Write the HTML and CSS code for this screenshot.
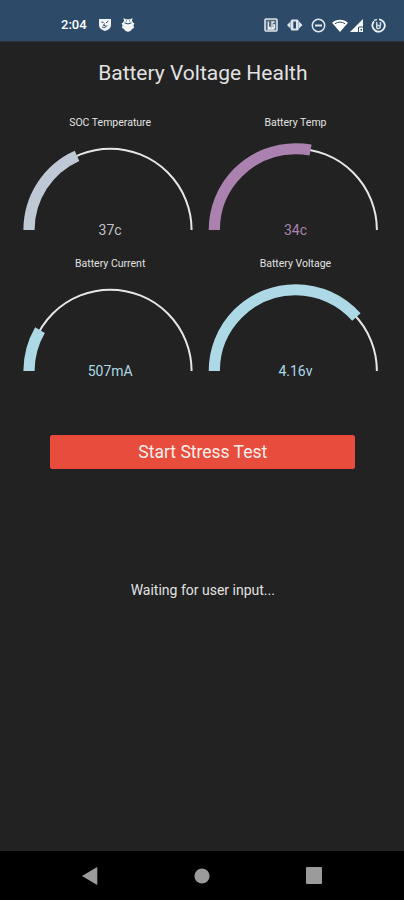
FILE: index.html
```
<!DOCTYPE html>
<html lang="en">
<head>
<meta charset="utf-8">
<title>Battery Voltage Health</title>
<link rel="stylesheet" href="styles.css">
</head>
<body>
<div class="phone">
  <header class="status">
    <time class="clock">2:04</time>
    <svg class="icon face" width="14" height="14" viewBox="0 0 14 14"><path fill="#f1f5f8" d="M1 1h12v6c0 3-2.500 5-6 6C3.500 12 1 10 1 7z"/><path fill="none" stroke="#2d4b69" stroke-width="1" d="M3.500 4l2 .5M8 5l2.500-2M4 9c2 .8 4 .5 5-1.500M6.500 5.500l-1 2h2"/></svg>
    <svg class="icon bug" width="14" height="16" viewBox="0 0 14 16"><path fill="#f1f5f8" d="M3 4L2.500 1l2.300 1.300h4.400L11.500 1 11 4l1 1.500 1.500 1-1 1.500.5 3-2 1c-1 2-2.500 2.700-4 2.700S4 14 3 12l-2-1 .5-3-1-1.500 1.500-1z"/><path stroke="#2d4b69" fill="none" d="M3.500 5.800q3.500 2.200 7 0M5.200 4h.8M8 4h.8"/></svg>
    <div class="system">
      <svg class="icon" width="14" height="14" viewBox="0 0 14 14"><rect x="1" y="1" width="12" height="12" rx="1" fill="#53697f" stroke="#dce3e9" stroke-width="1.600"/><path fill="none" stroke="#e8edf1" stroke-width="1.300" d="M4.300 3.500v6h2.500M10.500 4H8v5.500h2.500V7H9M3.500 11h7"/></svg>
      <svg class="icon" width="17" height="12" viewBox="0 0 17 12"><path fill="#dce5ed" d="M1 6l3.500-3.500v7zM16.500 6L13 2.500v7z"/><rect x="4.700" y="0.500" width="8" height="11" rx="1.500" fill="#dce5ed"/><path fill="#2d4b69" d="M7.300 2.500h2.700v7H7.300z"/></svg>
      <svg class="icon" width="15" height="15" viewBox="0 0 15 15"><circle cx="7.500" cy="7.500" r="6.200" fill="none" stroke="#dfe6ec" stroke-width="1.500"/><path stroke="#dfe6ec" stroke-width="2" d="M4 7.500h7"/></svg>
      <svg class="icon wifi" width="16" height="13" viewBox="0 0 16 13"><path fill="#fff" d="M0 3.700C4.500-.3 11.500-.3 16 3.700L8 13z"/><path fill="none" stroke="#2d4b69" stroke-width="1" d="M3 4.700q5-3.200 10 0"/></svg>
      <svg class="icon cell" width="13" height="13" viewBox="0 0 13 13"><path fill="#f4f7f9" d="M13 0v13H0z"/><path fill="#2d4b69" d="M8 8h1v5H8zM9 7.500h4v1H9zM10.500 10h1.500v1.500h-1.500z"/></svg>
      <svg class="icon" width="15" height="15" viewBox="0 0 15 15"><path fill="none" stroke="#eef2f5" stroke-width="1.800" d="M8 1.300a6.200 6.200 0 1 1-5 2"/><path fill="none" stroke="#cfd9e2" stroke-width="1.500" d="M3 2.500l3-1M5.700 4v6.500M5.700 7.500h2q1.600.2 1.600 1.500t-1.600 1.500h-2M9.500 4v4"/></svg>
    </div>
  </header>

  <main class="content">
    <h1 class="title">Battery Voltage Health</h1>
    <section class="gauges">
      <article class="gauge soc">
        <h2 class="label">SOC Temperature</h2>
        <svg class="dial" viewBox="0 0 176 92"><path class="track" d="M7 88a81.300 81.300 0 0 1 162.600 0"/><path class="level" pathLength="180" stroke-dasharray="65.800 200" d="M7 88a81.300 81.300 0 0 1 162.600 0"/></svg>
        <p class="value">37c</p>
      </article>
      <article class="gauge temp">
        <h2 class="label">Battery Temp</h2>
        <svg class="dial" viewBox="0 0 176 92"><path class="track" d="M7.300 88a81.300 81.300 0 0 1 162.600 0"/><path class="level" pathLength="180" stroke-dasharray="100.600 200" d="M7.300 88a81.300 81.300 0 0 1 162.600 0"/></svg>
        <p class="value">34c</p>
      </article>
      <article class="gauge current">
        <h2 class="label">Battery Current</h2>
        <svg class="dial" viewBox="0 0 176 92"><path class="track" d="M7 88a81.300 81.300 0 0 1 162.600 0"/><path class="level" pathLength="180" stroke-dasharray="30.200 200" d="M7 88a81.300 81.300 0 0 1 162.600 0"/></svg>
        <p class="value">507mA</p>
      </article>
      <article class="gauge voltage">
        <h2 class="label">Battery Voltage</h2>
        <svg class="dial" viewBox="0 0 176 92"><path class="track" d="M7.300 88a81.300 81.300 0 0 1 162.600 0"/><path class="level" pathLength="180" stroke-dasharray="138.400 200" d="M7.300 88a81.300 81.300 0 0 1 162.600 0"/></svg>
        <p class="value">4.16v</p>
      </article>
    </section>
    <button class="start" type="button">Start Stress Test</button>
    <p class="message">Waiting for user input...</p>
  </main>

  <nav class="navbar">
    <svg width="16" height="18" viewBox="0 0 16 18"><path d="M0 9L14.300.5Q15.300 0 15.300 1v16q0 1-1 .5z"/></svg>
    <svg width="16" height="16" viewBox="0 0 16 16"><circle cx="8" cy="8" r="7.600"/></svg>
    <svg width="16" height="17" viewBox="0 0 16 17"><rect width="16" height="17" rx="1"/></svg>
  </nav>
</div>
</body>
</html>
```
FILE: styles.css
```
* { box-sizing: border-box; }
body {
  margin: 0;
  background: #222;
  color: #e1e1e1;
  font-family: Roboto, "Liberation Sans", sans-serif;
}
h1, h2, p { margin: 0; font-weight: 400; }
.phone { display: flex; flex-direction: column; width: 404px; height: 900px; overflow: hidden; }

.status {
  display: flex;
  align-items: center;
  height: 42px;
  padding: 9px 18px 0 61px;
  background: #2d4b69;
  border-bottom: 1px solid #29323b;
}
.icon { display: block; flex: none; }
.clock { width: 37px; color: #fff; font-size: 13px; font-weight: 500; line-height: 16px; }
.bug { margin-left: 8.500px; }
.system { display: flex; align-items: center; gap: 8px; margin-left: auto; }
.wifi { margin-left: -2px; }
.cell { margin-left: -6px; }

.content { display: flex; flex: 1; flex-direction: column; align-items: center; padding-left: 1.600px; }
.title { margin-top: 17px; font-size: 21px; line-height: 28px; }
.gauges {
  display: grid;
  grid-template-columns: 185.300px 185.300px;
  grid-auto-rows: 141px;
  margin-top: 28px;
}
.gauge { display: flex; flex-direction: column; align-items: center; }
.label { font-size: 10.500px; line-height: 16px; }
.dial { display: block; width: 176px; height: 92px; margin-top: 11px; }
.track, .level { fill: none; }
.track { stroke: #e6e6e6; stroke-width: 2; }
.level { stroke: #add8e6; stroke-width: 11.200; }
.value { margin-top: -13px; font-size: 14px; line-height: 18px; color: #add8e6; }
.soc .level { stroke: #bec9d5; }
.soc .value { color: #c0c3c7; }
.temp .level { stroke: #ab82af; }
.temp .value { color: #ab82af; }

.start {
  width: 305px;
  height: 34px;
  margin-top: 38px;
  padding: 0;
  border: 0;
  border-radius: 2.500px;
  background: #e74c3c;
  color: #fff0ed;
  font: 400 17.500px/34px Roboto, "Liberation Sans", sans-serif;
}
.message { margin-top: 111px; font-size: 14px; line-height: 20px; }

.navbar {
  display: flex;
  justify-content: space-between;
  align-items: center;
  height: 49px;
  padding: 0 82px 0 82px;
  background: #000;
  fill: #9b9b9b;
}
```
